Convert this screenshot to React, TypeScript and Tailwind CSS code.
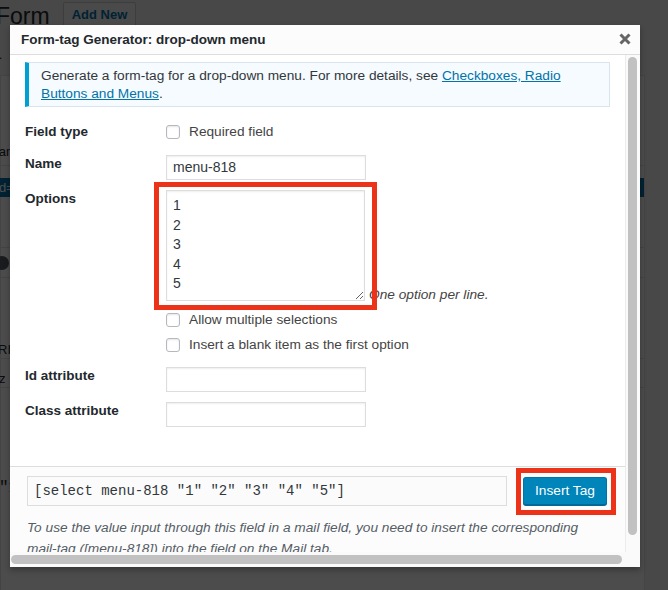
import React from "react";

const Checkbox: React.FC = () => (
  <span className="inline-block w-[14px] h-[14px] shrink-0 rounded-[3px] border border-[#b4b9be] bg-white shadow-[inset_0_1px_2px_rgba(0,0,0,0.1)]" />
);

const TextInput: React.FC<{ value?: string }> = ({ value }) => (
  <div className="w-[200px] h-[25px] border border-[#dddddd] bg-white shadow-[inset_0_1px_2px_rgba(0,0,0,0.07)] px-[6px] text-[14px] leading-[23px] text-[#32373c]">
    {value}
  </div>
);

const App: React.FC = () => {
  return (
    <div className="relative w-[668px] h-[590px] overflow-hidden bg-[#f1f1f1] font-['Liberation_Sans',Arial,sans-serif] text-[#23282d]">
      {/* admin page behind the overlay */}
      <div className="h-[32px] flex items-start gap-[13px] -ml-[4px] pt-[2px]">
        <h1 className="text-[23px] leading-[26px] font-normal pt-[1px]">Form</h1>
        <div className="px-[8px] h-[28px] border border-[#cccccc] bg-[#f7f7f7] rounded-[2px] text-[13px] font-bold leading-[24px] text-[#0073aa]">
          Add New
        </div>
      </div>
      <p className="-ml-[36px] mt-[14px] text-[13px] leading-[18px]">saved.</p>
      <div className="mt-[11px] w-[645px] h-[520px] bg-white border border-[#e5e5e5] flex flex-col">
        <div className="h-[90px] border-b border-[#e5e5e5] text-[13px] leading-[18px] -ml-[14px] pt-[67px]">Tran</div>
        <div className="mt-[12px] h-[19px] bg-[#0073aa] text-white text-[13px] leading-[19px] -ml-[4px] pl-[2px]">d=</div>
        <div className="mt-[50px] border-y border-[#e5e5e5] h-[31px] flex items-center -ml-[6px]">
          <span className="w-[14px] h-[14px] rounded-full bg-[#555d66]" />
        </div>
        <div className="mt-[51px] border-b border-[#e5e5e5] h-[30px] text-[13px] pt-[13px] leading-[16px] -ml-[3px]">RI</div>
        <div className="border-b border-[#e5e5e5] h-[29px] text-[13px] pt-[12px] leading-[16px] -ml-[2px]">z</div>
        <div className="mt-[92px] text-[16px] leading-[16px] font-['Liberation_Mono',monospace] -ml-[2px]">"1</div>
      </div>

      <div className="absolute inset-0 bg-black/70" />

      {/* modal */}
      <div className="absolute left-[10px] top-[25px] w-[630px] h-[542px] bg-white shadow-[0_3px_6px_rgba(0,0,0,0.3)] flex flex-col">
        <div className="h-[30px] shrink-0 bg-[#fcfcfc] border-b border-[#dddddd] flex items-center justify-between pl-[11px] pr-[9px]">
          <span className="text-[13.5px] font-semibold text-[#23282d] pt-[2px]">Form-tag Generator: drop-down menu</span>
          <svg width="12" height="12" viewBox="0 0 12 12" className="mt-[-1px]">
            <path d="M1.5 1.5 L10.5 10.5 M10.5 1.5 L1.5 10.5" stroke="#666666" strokeWidth="3" strokeLinecap="butt" />
          </svg>
        </div>

        <div className="flex flex-1 min-h-0">
          <div className="flex-1 min-w-0 overflow-hidden flex flex-col">
            <div className="pl-[15px] pr-[15px] pt-[7px] pb-[39px]">
              {/* notice */}
              <div className="h-[45px] border border-[#d8e5ec] border-l-4 border-l-[#00a0d2] bg-[#f5fbfe] pl-[12px] pt-[4px] text-[13.7px] leading-[18px] text-[#32373c]">
                Generate a form-tag for a drop-down menu. For more details, see{" "}
                <span className="text-[#0073aa] underline">Checkboxes, Radio Buttons and Menus</span>.
              </div>

              {/* field type */}
              <div className="flex mt-[16px]">
                <div className="w-[141px] text-[13.5px] font-bold leading-[18px]">Field type</div>
                <div className="flex items-center gap-[9px] text-[13.7px] leading-[18px] text-[#444444]">
                  <Checkbox />
                  Required field
                </div>
              </div>

              {/* name */}
              <div className="flex mt-[14px]">
                <div className="w-[141px] text-[13.5px] font-bold leading-[18px]">Name</div>
                <TextInput value="menu-818" />
              </div>

              {/* options */}
              <div className="flex mt-[10px]">
                <div className="w-[141px] text-[13.5px] font-bold leading-[18px]">Options</div>
                <div className="flex items-end gap-[4px]">
                  <div className="relative">
                    <textarea
                      readOnly
                      defaultValue={"1\n2\n3\n4\n5"}
                      className="block w-[199px] h-[111px] border border-[#dddddd] bg-white shadow-[inset_0_1px_2px_rgba(0,0,0,0.07)] px-[6px] pt-[5px] text-[14px] leading-[19.5px] text-[#32373c] outline-none resize-y font-['Liberation_Sans',Arial,sans-serif]"
                    />
                    <div className="absolute -left-[12px] -top-[8px] -right-[12px] -bottom-[9px] border-[5px] border-[#ec3219] pointer-events-none" />
                  </div>
                  <span className="text-[13.7px] italic leading-[18px] text-[#444444] mb-[-3px]">One option per line.</span>
                </div>
              </div>

              <div className="pl-[141px] mt-[10px] flex items-center gap-[9px] text-[13.7px] leading-[18px] text-[#444444]">
                <Checkbox />
                Allow multiple selections
              </div>
              <div className="pl-[141px] mt-[7px] flex items-center gap-[9px] text-[13.7px] leading-[18px] text-[#444444]">
                <Checkbox />
                Insert a blank item as the first option
              </div>

              <div className="flex mt-[13px]">
                <div className="w-[141px] text-[13.5px] font-bold leading-[18px]">Id attribute</div>
                <TextInput />
              </div>
              <div className="flex mt-[10px]">
                <div className="w-[141px] text-[13.5px] font-bold leading-[18px]">Class attribute</div>
                <TextInput />
              </div>
            </div>

            {/* insert box */}
            <div className="flex-1 bg-[#fcfcfc] border-t border-[#dddddd] pl-[17px] pr-[18px] pt-[9px] overflow-hidden">
              <div className="flex items-start gap-[16px]">
                <div className="w-[480px] h-[30px] border border-[#dddddd] bg-[#fbfbfb] px-[6px] font-['Liberation_Mono',monospace] text-[14px] leading-[28px] text-[#32373c] whitespace-nowrap">
                  [select menu-818 "1" "2" "3" "4" "5"]
                </div>
                <div className="relative mt-[1px]">
                  <div className="h-[28px] w-[84px] rounded-[3px] bg-[#0085ba] border border-[#0073aa] border-b-[#006799] shadow-[0_1px_0_#006799] text-white text-[13.7px] leading-[26px] text-center">
                    Insert Tag
                  </div>
                  <div className="absolute -left-[7px] -top-[9px] -right-[9px] -bottom-[10px] border-[5px] border-[#ec3219] pointer-events-none" />
                </div>
              </div>
              <p className="mt-[11px] text-[13.7px] italic leading-[21px] text-[#555d66]">
                To use the value input through this field in a mail field, you need to insert the corresponding
                mail-tag ([menu-818]) into the field on the Mail tab.
              </p>
            </div>
          </div>

          {/* vertical scrollbar */}
          <div className="w-[15px] shrink-0 border-l border-[#ececec] bg-[#fafafa] pl-[2px] pt-[2px]">
            <div className="w-[9px] h-[478px] rounded-full bg-[#c1c1c1]" />
          </div>
        </div>

        {/* horizontal scrollbar */}
        <div className="h-[15px] shrink-0 flex items-center pl-[1px] bg-[#fafafa]">
          <div className="w-[611px] h-[9px] rounded-full bg-[#c1c1c1]" />
        </div>
      </div>
    </div>
  );
};

export default App;
